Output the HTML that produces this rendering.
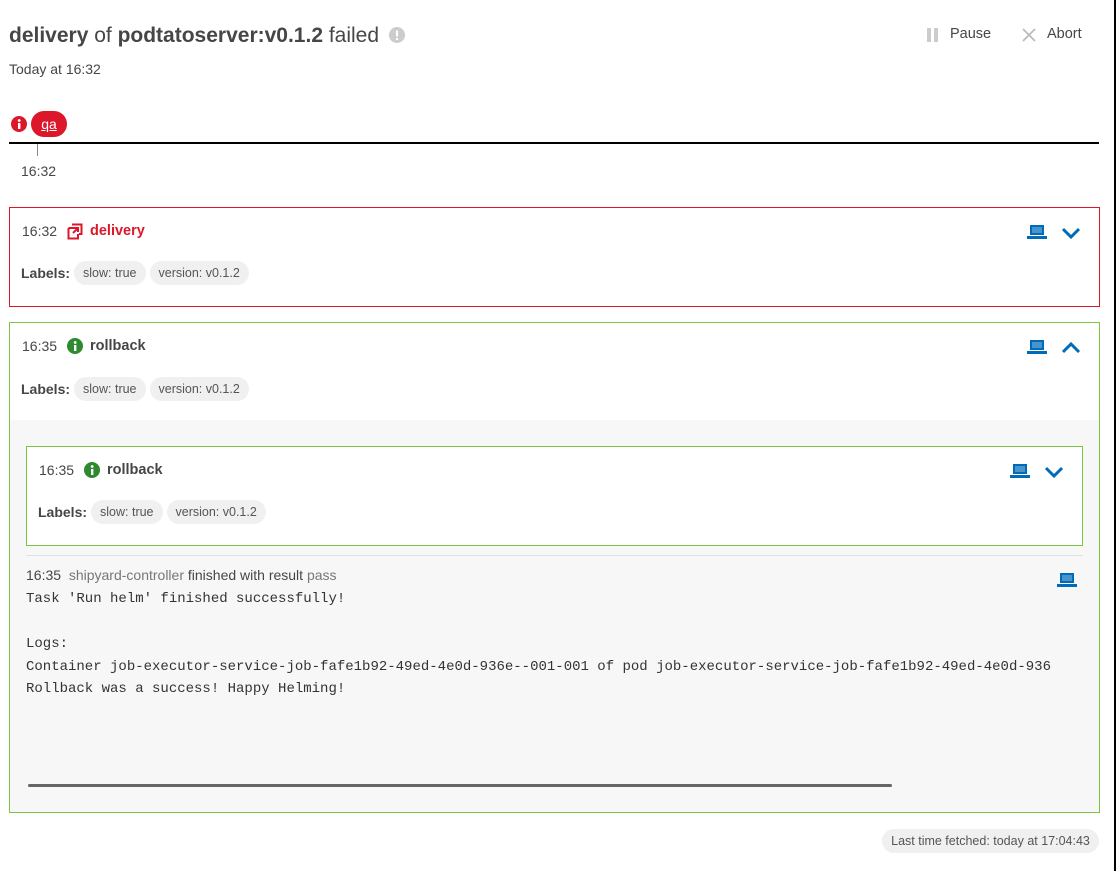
<!DOCTYPE html>
<html><head><meta charset="utf-8"><style>
*{box-sizing:border-box;margin:0;padding:0}
body{width:1116px;height:871px;background:#fff;font-family:"Liberation Sans",sans-serif;color:#454646;position:relative;overflow:hidden;font-size:14px}
.abs{position:absolute}
.card{position:absolute;left:9px;width:1091px;border:1px solid;background:#fff}
.time{position:absolute;font-size:14px;color:#454646}
.ttl{position:absolute;font-weight:bold;font-size:14.5px}
.lab{position:absolute;font-size:14px;font-weight:bold;display:flex;align-items:center}
.pill{display:inline-block;background:#f0f0f0;border-radius:12px;font-size:12.5px;font-weight:normal;padding:4px 9px;margin-left:4px;line-height:16px;color:#555}
.mono{font-family:"Liberation Mono",monospace;font-size:14px;color:#333;white-space:pre;line-height:22.5px}
</style></head><body>
<div class="abs" style="right:0;top:0;width:2px;height:871px;background:#000"></div>
<div class="abs" style="left:9px;top:22px;font-size:21px;line-height:27px;color:#454646"><b>delivery</b> of <b>podtatoserver:v0.1.2</b> failed</div>
<svg class="abs" style="left:389px;top:27px" width="16" height="16"><circle cx="8" cy="8" r="8" fill="#ccc"/><rect x="7" y="3.5" width="2" height="6" fill="#fff"/><rect x="7" y="11" width="2" height="2" fill="#fff"/></svg>
<div class="abs" style="left:9px;top:61px;font-size:14px">Today at 16:32</div>
<div class="abs" style="left:927px;top:28px;width:4px;height:14px;background:#ccc"></div>
<div class="abs" style="left:934px;top:28px;width:4px;height:14px;background:#ccc"></div>
<div class="abs" style="left:950px;top:26px;font-size:14.5px">Pause</div>
<svg class="abs" style="left:1022px;top:28px" width="14" height="14"><path d="M1 1L13 13M13 1L1 13" stroke="#bbb" stroke-width="1.8"/></svg>
<div class="abs" style="left:1047px;top:26px;font-size:14.5px">Abort</div>
<svg class="abs" style="left:11px;top:116px" width="16" height="16"><circle cx="8" cy="8" r="8" fill="#dc172a"/><rect x="7" y="7" width="2.4" height="6" fill="#fff"/><circle cx="8.2" cy="4.5" r="1.4" fill="#fff"/></svg>
<div class="abs" style="left:31px;top:111px;width:36px;height:26px;border-radius:13px;background:#dc172a;color:#fff;text-align:center;line-height:26px;font-size:14px;text-decoration:underline">qa</div>
<div class="abs" style="left:9px;top:142px;width:1090px;height:2px;background:#000"></div>
<div class="abs" style="left:37px;top:144px;width:1px;height:12px;background:#888"></div>
<div class="abs" style="left:21px;top:163px;font-size:14px">16:32</div>

<div class="card" style="top:207px;height:100px;border-color:#dc172a">
<div class="time" style="left:12px;top:15px">16:32</div>
<svg class="abs" style="left:57px;top:15px" width="16" height="17"><path d="M5 1.5H14.5V11H12" stroke="#dc172a" stroke-width="2" fill="none"/><path d="M1.5 5H9M1.5 5V15.5H11V11" stroke="#dc172a" stroke-width="2" fill="none"/><path d="M6 10L11 5M7 5H11V9" stroke="#dc172a" stroke-width="2" fill="none"/></svg>
<div class="ttl" style="left:80px;top:15px;color:#dc172a">delivery</div>
<div class="lab" style="left:11px;top:53px">Labels:<span class="pill">slow: true</span><span class="pill">version: v0.1.2</span></div>
<svg class="abs" style="left:1017px;top:16px" width="20" height="16"><rect x="3" y="1" width="14" height="10" fill="#006bb8"/><path d="M5 4H15M5 6H15M5 8H15" stroke="#8fbfe3" stroke-width="1"/><rect x="0" y="12" width="20" height="3" fill="#006bb8"/></svg>
<svg class="abs" style="left:1051px;top:18px" width="20" height="14"><path d="M2 3L10 11L18 3" stroke="#006bb8" stroke-width="3" fill="none"/></svg>
</div>

<div class="card" style="top:322px;height:491px;border-color:#7dc540">
<div class="time" style="left:12px;top:15px">16:35</div>
<svg class="abs" style="left:57px;top:15px" width="16" height="16"><circle cx="8" cy="8" r="8" fill="#2f8a2f"/><rect x="7" y="7" width="2.4" height="6" fill="#fff"/><circle cx="8.2" cy="4.5" r="1.4" fill="#fff"/></svg>
<div class="ttl" style="left:80px;top:15px">rollback</div>
<div class="lab" style="left:11px;top:54px">Labels:<span class="pill">slow: true</span><span class="pill">version: v0.1.2</span></div>
<svg class="abs" style="left:1017px;top:16px" width="20" height="16"><rect x="3" y="1" width="14" height="10" fill="#006bb8"/><path d="M5 4H15M5 6H15M5 8H15" stroke="#8fbfe3" stroke-width="1"/><rect x="0" y="12" width="20" height="3" fill="#006bb8"/></svg>
<svg class="abs" style="left:1051px;top:18px" width="20" height="14"><path d="M2 11L10 3L18 11" stroke="#006bb8" stroke-width="3" fill="none"/></svg>
<div class="abs" style="left:0;top:97px;width:1089px;height:392px;background:#f7f7f7">
 <div class="abs" style="left:16px;top:26px;width:1057px;height:100px;background:#fff;border:1px solid #7dc540">
  <div class="time" style="left:12px;top:15px">16:35</div>
  <svg class="abs" style="left:57px;top:15px" width="16" height="16"><circle cx="8" cy="8" r="8" fill="#2f8a2f"/><rect x="7" y="7" width="2.4" height="6" fill="#fff"/><circle cx="8.2" cy="4.5" r="1.4" fill="#fff"/></svg>
  <div class="ttl" style="left:80px;top:15px">rollback</div>
  <div class="lab" style="left:11px;top:53px">Labels:<span class="pill">slow: true</span><span class="pill">version: v0.1.2</span></div>
  <svg class="abs" style="left:983px;top:16px" width="20" height="16"><rect x="3" y="1" width="14" height="10" fill="#006bb8"/><path d="M5 4H15M5 6H15M5 8H15" stroke="#8fbfe3" stroke-width="1"/><rect x="0" y="12" width="20" height="3" fill="#006bb8"/></svg>
  <svg class="abs" style="left:1017px;top:18px" width="20" height="14"><path d="M2 3L10 11L18 3" stroke="#006bb8" stroke-width="3" fill="none"/></svg>
 </div>
 <div class="abs" style="left:16px;top:135px;width:1057px;height:1px;background:#e0e0e0"></div>
 <div class="abs" style="left:16px;top:147px;font-size:14px;white-space:nowrap">16:35 &nbsp;<span style="color:#777">shipyard-controller</span> finished with result <span style="color:#777">pass</span></div>
 <svg class="abs" style="left:1047px;top:152px" width="20" height="16"><rect x="3" y="1" width="14" height="10" fill="#006bb8"/><path d="M5 4H15M5 6H15M5 8H15" stroke="#8fbfe3" stroke-width="1"/><rect x="0" y="12" width="20" height="3" fill="#006bb8"/></svg>
 <div class="abs mono" style="left:16px;top:168px;width:1025px;overflow:hidden">Task 'Run helm' finished successfully!

Logs:
Container job-executor-service-job-fafe1b92-49ed-4e0d-936e--001-001 of pod job-executor-service-job-fafe1b92-49ed-4e0d-936e--001-001
Rollback was a success! Happy Helming!</div>
 <div class="abs" style="left:18px;top:364px;width:864px;height:3px;background:#666;border-radius:2px"></div>
</div>
</div>
<div class="abs" style="left:882px;top:829px;width:217px;height:24px;border-radius:12px;background:#f0f0f0;font-size:12.5px;line-height:24px;text-align:center;color:#555">Last time fetched: today at 17:04:43</div>
</body></html>
